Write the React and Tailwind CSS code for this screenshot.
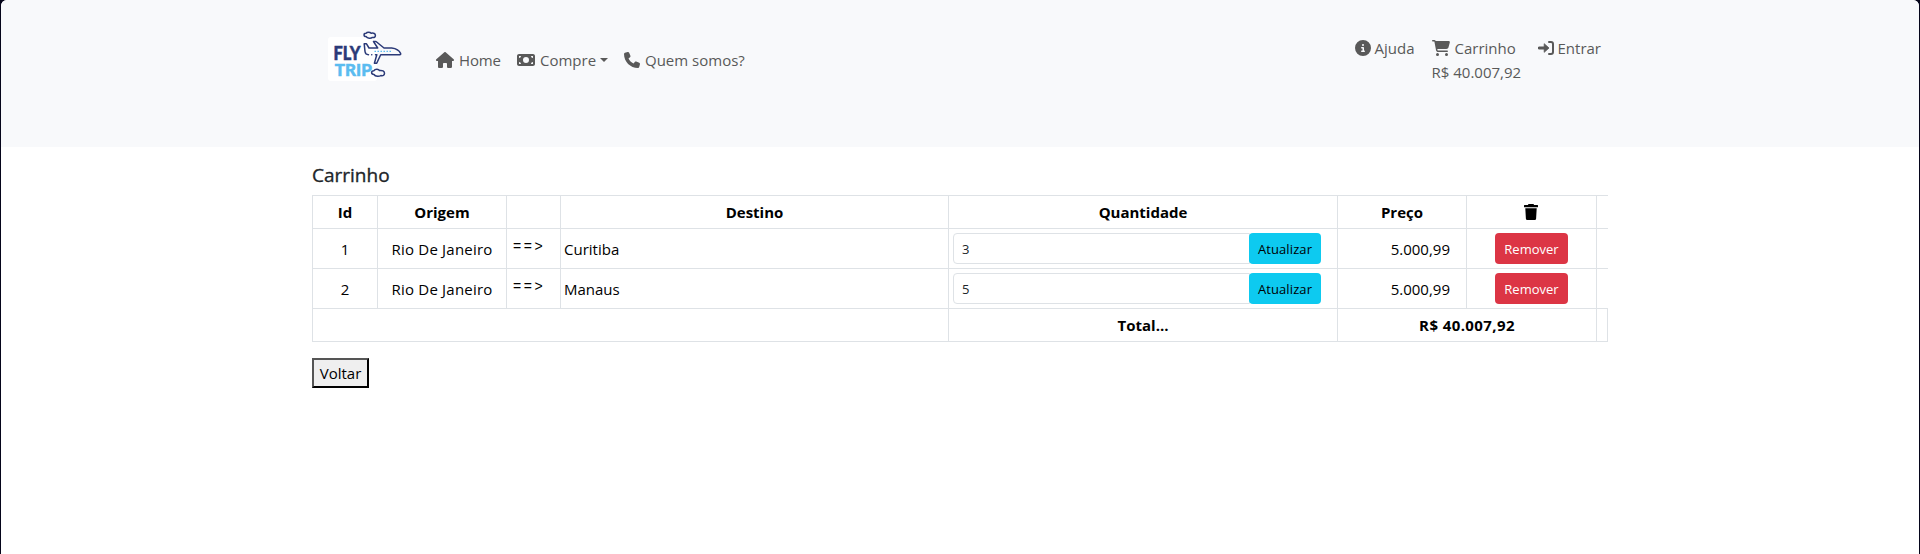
import { FaHouse, FaMoneyBill, FaPhone, FaCircleInfo, FaCartShopping } from 'react-icons/fa6';

const rows = [
  { id: 1, from: 'Rio De Janeiro', to: 'Curitiba', qty: 3, price: '5.000,99' },
  { id: 2, from: 'Rio De Janeiro', to: 'Manaus', qty: 5, price: '5.000,99' },
];

function Logo() {
  return (
    <svg className="block h-[60px] w-[80px]" viewBox="0 0 80 60" fill="none">
      <rect x="1" y="12" width="49" height="44" rx="3" fill="#fff" />
      <text className="font-['Lato',sans-serif] font-black" strokeWidth="0.5">
        <tspan x="6.500" y="35" fontSize="18.200" textLength="27" lengthAdjust="spacingAndGlyphs" fill="#2b3a78" stroke="#2b3a78">FLY</tspan>
        <tspan x="7.800" y="51" fontSize="17" textLength="37" lengthAdjust="spacingAndGlyphs" fill="#5bbcf0" stroke="#5bbcf0">TRIP</tspan>
      </text>
      <g stroke="#2b3a78" strokeWidth="1.5" strokeLinecap="round" strokeLinejoin="round">
        <path d="M39 11.500c-2.600 0-2.600-3.200 0-3.200 1-1.500 4-1.500 5.200 0 2.500-.6 4.200.4 4.200 2.200s-1.300 2.300-3 1.900c-1.500 1.200-5 1.100-6.400-.9Z" />
        <path d="M47 49.500c-3.200 0-3.200-3.800 0-3.800 1-1.900 4.500-1.900 5.500-.2 2.800-.5 5 .7 5 2.800s-1.700 2.600-3.600 2.200c-1.800 1.300-5.500 1.200-6.900-1Z" />
        <path d="M50.700 23 46.500 16.500H49L57 23h7.700c4 .5 7.800 2.800 8.900 5.400.3.800 0 1.300-.8 1.300H53.700l-4 8.600h-2.300l2.400-8.600h-1.300M50.700 23H42l-2.500-4.200h-2.300l.8 7.700c.3 2 1.500 3.200 3.500 3.200M44.700 29.700h.1" />
      </g>
      <path d="M47.500 26.300h17" stroke="#5bbcf0" strokeWidth="1.2" strokeDasharray="1.500 1.500" />
    </svg>
  );
}

function EnterIcon() {
  return (
    <svg className="mr-1 h-4 w-4" viewBox="0 0 16 16" fill="none">
      <path d="M1.200 8h6" stroke="currentColor" strokeWidth="3" strokeLinecap="round" />
      <path d="M6.200 3.700v8.600L11 8Z" fill="currentColor" stroke="currentColor" strokeWidth="0.8" strokeLinejoin="round" />
      <path d="M11 2h2a2 2 0 0 1 2 2v8a2 2 0 0 1-2 2h-2" stroke="currentColor" strokeWidth="2" strokeLinecap="round" />
    </svg>
  );
}

function TrashIcon() {
  return (
    <svg className="mr-px h-4 w-[14px]" viewBox="0 0 14 16" fill="currentColor">
      <path d="M4.500 0h5l.6 1H13.500q.5 0 .5.500v1.200q0 .5-.5.500H.5q-.5 0-.5-.5V1.500Q0 1 .5 1h3.400ZM1.300 4.200h11.400l-.6 10.500q-.1 1.300-1.400 1.300H3.300q-1.300 0-1.400-1.300Z" />
    </svg>
  );
}

function Cell({ className = '', children }) {
  return <div className={`flex items-center border-l border-t border-[#dee2e6] ${className}`}>{children}</div>;
}

const grid = 'grid grid-cols-[65px_129px_54px_388px_389px_129px_130px_12px]';

export default function App() {
  return (
    <div className="h-[554px] overflow-hidden bg-[#05051a] font-['Open_Sans',sans-serif] text-[15px] leading-6 text-black">
      <div className="mx-px h-[554px] overflow-hidden rounded-t-[6px] bg-white">
        <header className="h-[147px] bg-[#f8f9fb] pl-[326px] pr-[318px] text-[#595959]">
          <div className="flex items-start pt-[25px]">
            <Logo />
            <nav className="mt-[23px] flex items-center">
              <a className="ml-[29px] flex items-center"><FaHouse className="mr-[5px] h-4 w-[18px]" /><span className="w-[42px] tracking-[-0.15px]">Home</span></a>
              <a className="ml-4 flex items-center"><FaMoneyBill className="mr-[5px] h-[18px] w-[18px]" /><span className="w-[55px] whitespace-nowrap">Compre</span><span className="ml-[5px] h-0 w-0 border-x-[4.5px] border-t-[4.5px] border-x-transparent border-t-[#595959]" /></a>
              <a className="ml-4 flex items-center"><FaPhone className="mr-[5px] h-4 w-4" /><span className="whitespace-nowrap">Quem somos?</span></a>
            </nav>
            <div className="ml-auto mt-[11px] flex items-start">
              <a className="flex items-center"><FaCircleInfo className="mr-1 h-4 w-4" /><span className="w-[41px]">Ajuda</span></a>
              <a className="ml-4 w-[90px] whitespace-nowrap"><span className="flex items-center"><FaCartShopping className="mr-[5px] h-4 w-[18px]" />Carrinho</span><span className="block">R$ 40.007,92</span></a>
              <a className="ml-4 flex items-center"><EnterIcon /><span>Entrar</span></a>
            </div>
          </div>
        </header>
        <main className="pl-[311px] pt-4">
          <h1 className="mb-2 text-[19px] leading-6 text-[#212529] [-webkit-text-stroke:0.35px_#212529]">Carrinho</h1>
          <div className="w-[1296px]">
            <div className={`${grid} h-[33px] font-bold`}>
              <Cell className="justify-center">Id</Cell>
              <Cell className="justify-center">Origem</Cell>
              <Cell />
              <Cell className="justify-center">Destino</Cell>
              <Cell className="justify-center">Quantidade</Cell>
              <Cell className="justify-center">Preço</Cell>
              <Cell className="justify-center"><TrashIcon /></Cell>
              <Cell />
            </div>
            {rows.map((r) => (
              <div key={r.id} className={`${grid} h-10`}>
                <Cell className="justify-center">{r.id}</Cell>
                <Cell className="justify-center tracking-[0.2px]">{r.from}</Cell>
                <Cell className="pb-[5px] pl-[6px] font-['Liberation_Sans',sans-serif] text-[14px] tracking-[2.6px]">==&gt;</Cell>
                <Cell className="pl-[3px]">{r.to}</Cell>
                <Cell className="pl-1">
                  <div className="flex h-[31px] w-[297px] items-center rounded-l-[4px] border border-[#dee2e6] pl-2 text-[13px] text-[#212529]">{r.qty}</div>
                  <button className="-ml-px h-[31px] w-[72px] rounded-[4px] bg-[#0dcaf0] text-[13px] tracking-[0.1px]">Atualizar</button>
                </Cell>
                <Cell className="justify-end pr-4">{r.price}</Cell>
                <Cell className="justify-center"><button className="h-[31px] w-[73px] rounded-[4px] bg-[#dc3545] text-[13px] text-white">Remover</button></Cell>
                <Cell />
              </div>
            ))}
            <div className={`${grid} h-[34px] border-b border-[#dee2e6] font-bold`}>
              <Cell className="col-span-4" />
              <Cell className="justify-center">Total...</Cell>
              <Cell className="col-span-2 justify-center tracking-[0.4px]">R$ 40.007,92</Cell>
              <Cell className="border-r" />
            </div>
          </div>
          <button className="mt-4 h-[30px] w-[57px] border-2 border-b-black border-l-[#555] border-r-black border-t-[#555] bg-[#efefef]">Voltar</button>
        </main>
      </div>
    </div>
  );
}
